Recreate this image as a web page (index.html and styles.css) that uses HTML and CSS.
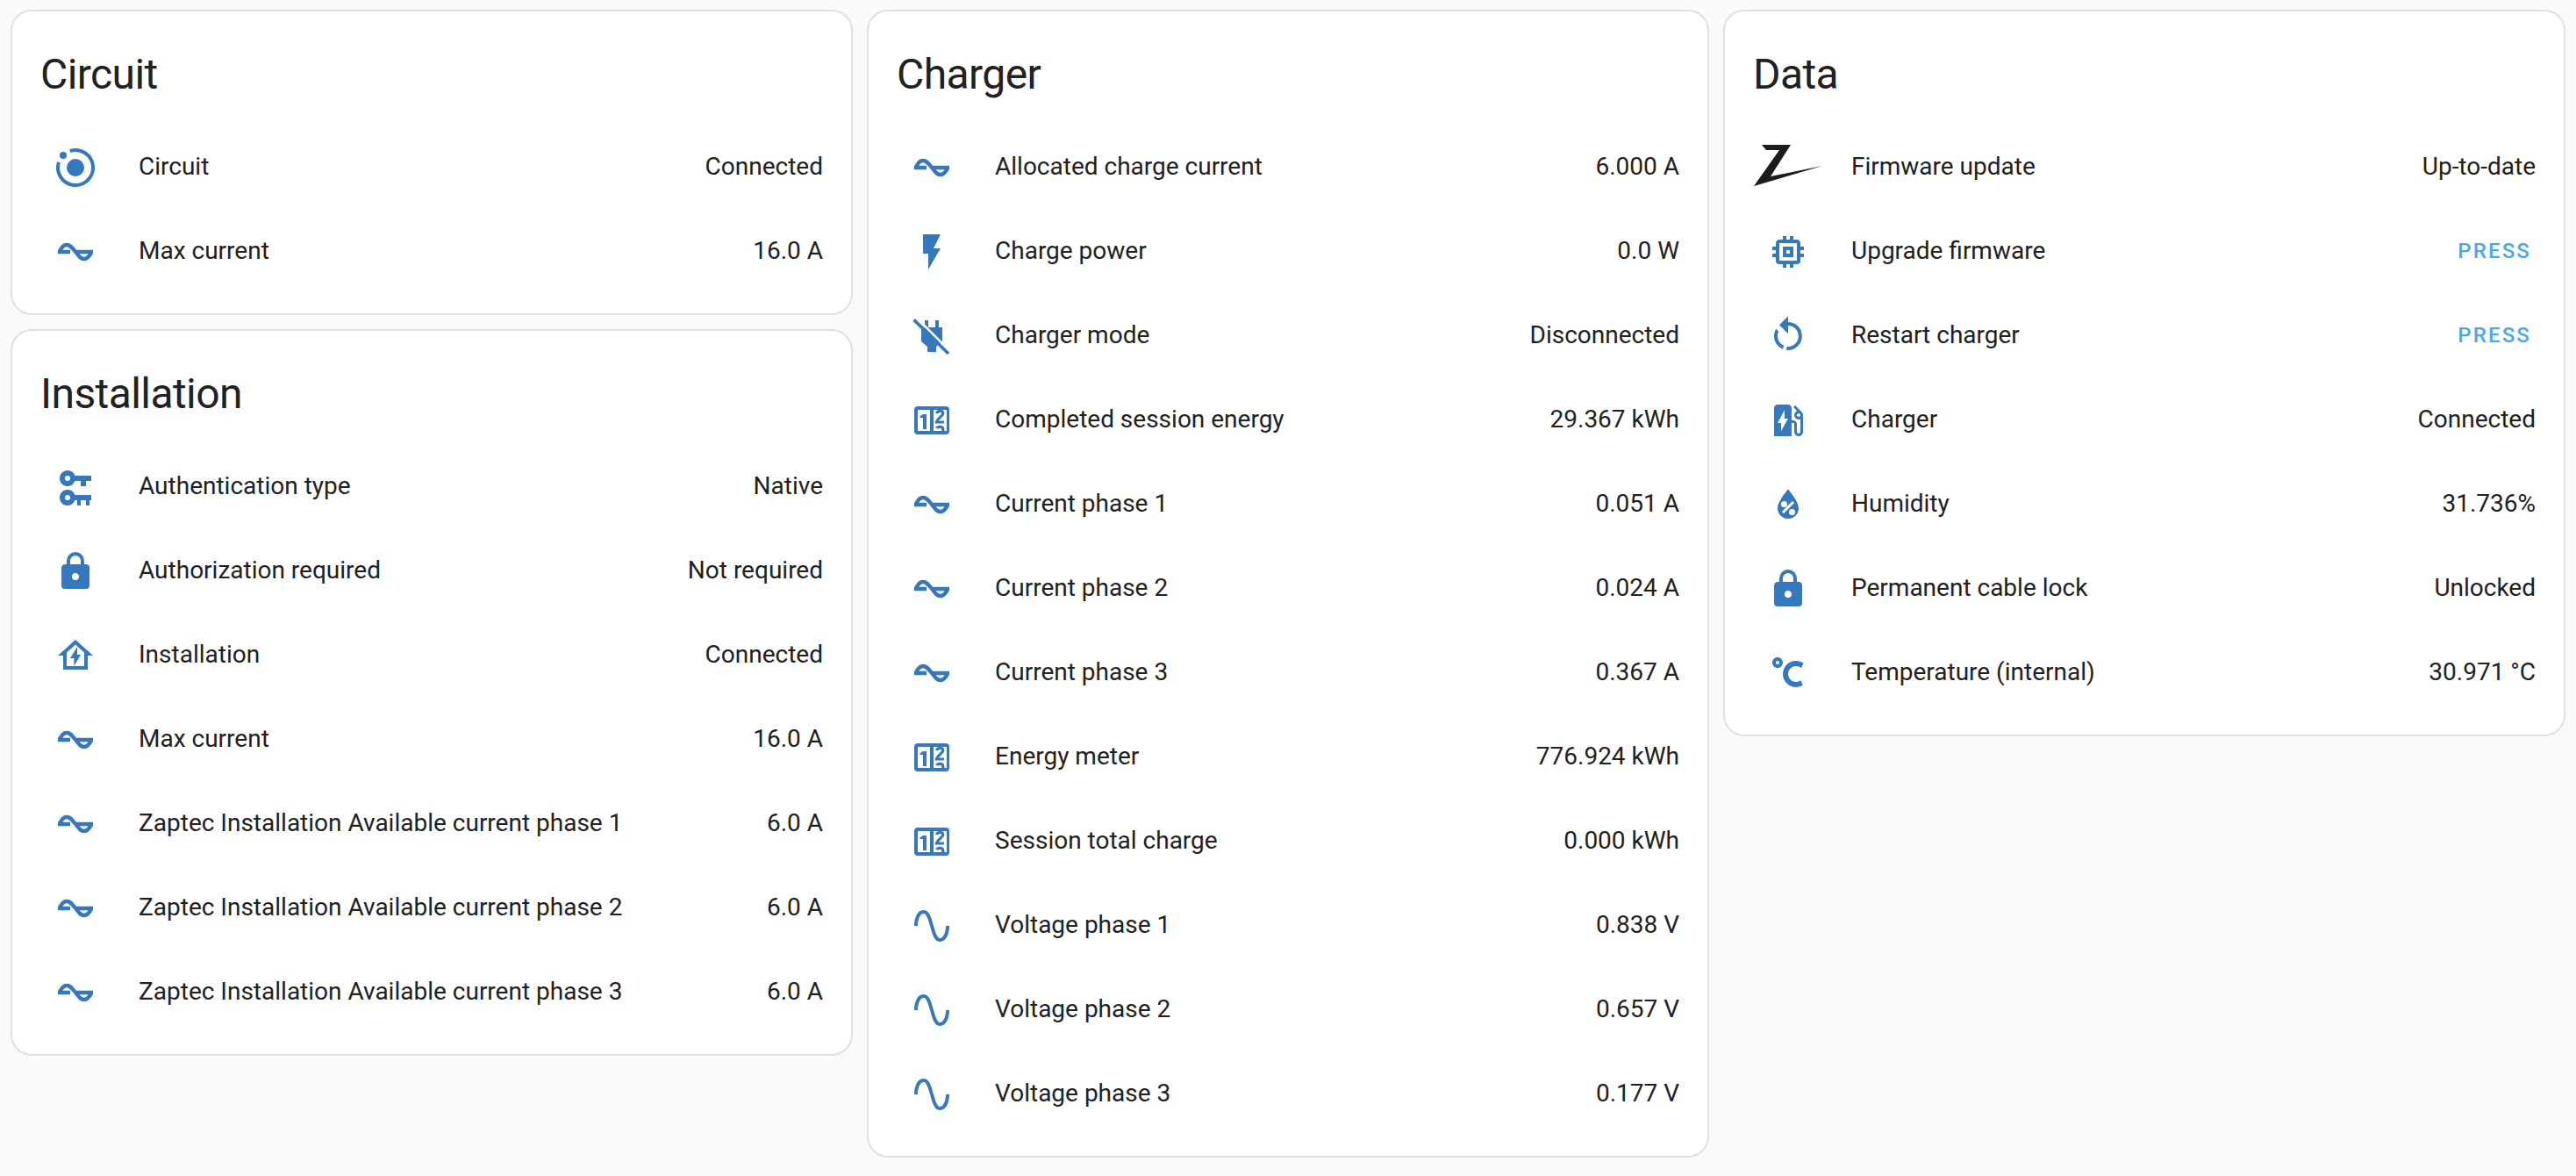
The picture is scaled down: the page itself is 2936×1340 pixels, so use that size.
FILE: index.html
```html
<!DOCTYPE html>
<html lang="en">
<head>
    <meta charset="UTF-8">
    <meta name="viewport" content="width=device-width, initial-scale=1.0">
    <title>Zaptec</title>
    <link rel="stylesheet" href="styles.css">
</head>
<body>
    <!-- icon set, used by every row below -->
    <svg class="icon-defs" aria-hidden="true">
        <symbol id="i-ionic" viewBox="0 0 24 24">
            <circle cx="12" cy="12" r="5"/>
            <circle cx="5" cy="5" r="2"/>
            <path class="line" d="M8.9 2.5A10 10 0 1 1 2.5 8.9"/>
        </symbol>
        <symbol id="i-current" viewBox="0 0 24 24">
            <path class="wave" d="M2 12H9M12 12H22M3 11.6C4 9.6 5.4 8 7 8C9 8 10 9.5 12 12C14 14.5 15 16 17 16C18.6 16 20 14.4 21 12.4"/>
        </symbol>
        <symbol id="i-keys" viewBox="0 0 24 24">
            <path fill-rule="evenodd" d="M7.5 2.5A4.5 4.5 0 0 1 11.7 5.5H21V8.5H18V11.5H15V8.5H11.7A4.5 4.5 0 1 1 7.5 2.5ZM7.5 5.5A1.5 1.5 0 1 0 7.5 8.5A1.5 1.5 0 1 0 7.5 5.5Z"/>
            <path fill-rule="evenodd" d="M7.5 13.5A4.5 4.5 0 0 1 11.7 16.5H21V19.5H20V22.5H18V19.5H15V22.5H13V19.5H11.7A4.5 4.5 0 1 1 7.5 13.5ZM7.5 16.5A1.5 1.5 0 1 0 7.5 19.5A1.5 1.5 0 1 0 7.5 16.5Z"/>
        </symbol>
        <symbol id="i-lock" viewBox="0 0 24 24">
            <path d="M12,17A2,2 0 0,0 14,15C14,13.89 13.1,13 12,13A2,2 0 0,0 10,15A2,2 0 0,0 12,17M18,8A2,2 0 0,1 20,10V20A2,2 0 0,1 18,22H6A2,2 0 0,1 4,20V10C4,8.89 4.9,8 6,8H7V6A5,5 0 0,1 12,1A5,5 0 0,1 17,6V8H18M12,3A3,3 0 0,0 9,6V8H15V6A3,3 0 0,0 12,3Z"/>
        </symbol>
        <symbol id="i-home-bolt" viewBox="0 0 24 24">
            <path fill-rule="evenodd" d="M12 3L2 12H5V20H19V12H22L12 3ZM12 5.7L17 10.2V18H7V10.2L12 5.7Z"/>
            <path d="M13 7L9 13.5H11.2V18L15 11.5H13V7Z"/>
        </symbol>
        <symbol id="i-flash" viewBox="0 0 24 24">
            <path d="M7,2V13H10V22L17,10H13L17,2H7Z"/>
        </symbol>
        <symbol id="i-plug-off" viewBox="0 0 24 24">
            <path d="M8 3H10V7H14V3H16V7H18V15L14.5 18V21H9.5V18L6 15V7H8Z"/>
            <path class="gap" d="M3 1.2L23 21.2"/>
            <path class="slash" d="M1.8 2.7L21.5 22"/>
        </symbol>
        <symbol id="i-counter" viewBox="0 0 24 24">
            <path fill-rule="evenodd" d="M4 4H20A2 2 0 0 1 22 6V18A2 2 0 0 1 20 20H4A2 2 0 0 1 2 18V6A2 2 0 0 1 4 4ZM4 6V18H11V6H4ZM13 6V18H20.5V6H13Z"/>
            <path d="M7 8.5H9V17H7V10.5H5.3V9.6Z"/>
            <path class="digit" d="M14.8 8C15 6.5 18.4 6 18.4 8C18.4 9.6 15 11 14.7 13H19"/>
            <path class="digit" d="M14.8 16.6C15.3 15.4 18.4 15.3 18.4 17V18"/>
        </symbol>
        <symbol id="i-sine" viewBox="0 0 24 24">
            <path d="M16.5,21C13.5,21 12.31,16.76 11.05,12.28C10.14,9.04 9,5 7.5,5C4.11,5 4,11.93 4,12H2C2,11.63 2.06,3 7.5,3C10.5,3 11.71,7.25 12.97,11.74C13.83,14.8 15,19 16.5,19C19.94,19 20.03,12.07 20.03,12H22.03C22.03,12.37 21.97,21 16.5,21Z"/>
        </symbol>
        <symbol id="i-memory" viewBox="0 0 24 24">
            <path d="M17,17H7V7H17M21,11V9H19V7C19,5.89 18.1,5 17,5H15V3H13V5H11V3H9V5H7C5.89,5 5,5.89 5,7V9H3V11H5V13H3V15H5V17A2,2 0 0,0 7,19H9V21H11V19H13V21H15V19H17A2,2 0 0,0 19,17V15H21V13H19V11M13,13H11V11H13M15,9H9V15H15V9Z"/>
        </symbol>
        <symbol id="i-restart" viewBox="0 0 24 24">
            <path d="M12,4C14.1,4 16.1,4.8 17.6,6.3C20.7,9.4 20.7,14.5 17.6,17.6C15.8,19.5 13.3,20.2 10.9,19.9L11.4,17.9C13.1,18.1 14.9,17.5 16.2,16.2C18.5,13.9 18.5,10.1 16.2,7.7C15.1,6.6 13.5,6 12,6V10.6L7,5.6L12,0.6V4M6.3,17.6C3.7,15 3.3,11 5.1,7.9L6.6,9.4C5.5,11.6 5.9,14.4 7.8,16.2C8.3,16.7 8.9,17.1 9.6,17.4L9,19.4C8,19 7.1,18.4 6.3,17.6Z"/>
        </symbol>
        <symbol id="i-ev" viewBox="0 0 24 24">
            <path d="M19.77 7.23l.01-.01-3.72-3.72L15 4.56l2.11 2.11c-.94.36-1.61 1.26-1.61 2.33 0 1.38 1.12 2.5 2.5 2.5.36 0 .69-.08 1-.21v7.21c0 .55-.45 1-1 1s-1-.45-1-1V14c0-1.1-.9-2-2-2h-1V5c0-1.1-.9-2-2-2H6c-1.1 0-2 .9-2 2v16h10v-7.5h1.5v5c0 1.38 1.12 2.5 2.5 2.5s2.5-1.12 2.5-2.5V9c0-.69-.28-1.32-.73-1.77zM18 10c-.55 0-1-.45-1-1s.45-1 1-1 1 .45 1 1-.45 1-1 1zM8 18v-4.5H6L10 6v5h2l-4 7z"/>
        </symbol>
        <symbol id="i-water" viewBox="0 0 24 24">
            <path d="M12,3.25C12,3.25 6,10 6,14C6,17.32 8.69,20 12,20A6,6 0 0,0 18,14C18,10 12,3.25 12,3.25M14.47,9.97L15.53,11.03L9.53,17.03L8.47,15.97M9.75,10A1.75,1.75 0 0,1 11.5,11.75A1.75,1.75 0 0,1 9.75,13.5A1.75,1.75 0 0,1 8,11.75A1.75,1.75 0 0,1 9.75,10M14.25,14.5A1.75,1.75 0 0,1 16,16.25A1.75,1.75 0 0,1 14.25,18A1.75,1.75 0 0,1 12.5,16.25A1.75,1.75 0 0,1 14.25,14.5Z"/>
        </symbol>
        <symbol id="i-celsius" viewBox="0 0 24 24">
            <path d="M16.5,5C18.05,5 19.5,5.47 20.69,6.28L19.53,9.17C18.73,8.44 17.67,8 16.5,8C14,8 12,10 12,12.5C12,15 14,17 16.5,17C17.53,17 18.47,16.66 19.23,16.08L20.37,18.93C19.24,19.61 17.92,20 16.5,20C12.36,20 9,16.64 9,12.5C9,8.36 12.36,5 16.5,5M6,3C7.66,3 9,4.34 9,6C9,7.66 7.66,9 6,9C4.34,9 3,7.66 3,6C3,4.34 4.34,3 6,3M6,5C5.45,5 5,5.45 5,6C5,6.55 5.45,7 6,7C6.55,7 7,6.55 7,6C7,5.45 6.55,5 6,5Z"/>
        </symbol>
    </svg>

    <div class="dashboard">
        <div class="column">
            <section class="card">
                <h2 class="card-title">Circuit</h2>
                <div class="rows">
                    <div class="row"><span class="badge"><svg class="icon"><use href="#i-ionic"/></svg></span><span class="name">Circuit</span><span class="state">Connected</span></div>
                    <div class="row"><span class="badge"><svg class="icon"><use href="#i-current"/></svg></span><span class="name">Max current</span><span class="state">16.0 A</span></div>
                </div>
            </section>
            <section class="card">
                <h2 class="card-title">Installation</h2>
                <div class="rows">
                    <div class="row"><span class="badge"><svg class="icon"><use href="#i-keys"/></svg></span><span class="name">Authentication type</span><span class="state">Native</span></div>
                    <div class="row"><span class="badge"><svg class="icon"><use href="#i-lock"/></svg></span><span class="name">Authorization required</span><span class="state">Not required</span></div>
                    <div class="row"><span class="badge"><svg class="icon"><use href="#i-home-bolt"/></svg></span><span class="name">Installation</span><span class="state">Connected</span></div>
                    <div class="row"><span class="badge"><svg class="icon"><use href="#i-current"/></svg></span><span class="name">Max current</span><span class="state">16.0 A</span></div>
                    <div class="row"><span class="badge"><svg class="icon"><use href="#i-current"/></svg></span><span class="name">Zaptec Installation Available current phase 1</span><span class="state">6.0 A</span></div>
                    <div class="row"><span class="badge"><svg class="icon"><use href="#i-current"/></svg></span><span class="name">Zaptec Installation Available current phase 2</span><span class="state">6.0 A</span></div>
                    <div class="row"><span class="badge"><svg class="icon"><use href="#i-current"/></svg></span><span class="name">Zaptec Installation Available current phase 3</span><span class="state">6.0 A</span></div>
                </div>
            </section>
        </div>

        <div class="column">
            <section class="card">
                <h2 class="card-title">Charger</h2>
                <div class="rows">
                    <div class="row"><span class="badge"><svg class="icon"><use href="#i-current"/></svg></span><span class="name">Allocated charge current</span><span class="state">6.000 A</span></div>
                    <div class="row"><span class="badge"><svg class="icon"><use href="#i-flash"/></svg></span><span class="name">Charge power</span><span class="state">0.0 W</span></div>
                    <div class="row"><span class="badge"><svg class="icon"><use href="#i-plug-off"/></svg></span><span class="name">Charger mode</span><span class="state">Disconnected</span></div>
                    <div class="row"><span class="badge"><svg class="icon"><use href="#i-counter"/></svg></span><span class="name">Completed session energy</span><span class="state">29.367 kWh</span></div>
                    <div class="row"><span class="badge"><svg class="icon"><use href="#i-current"/></svg></span><span class="name">Current phase 1</span><span class="state">0.051 A</span></div>
                    <div class="row"><span class="badge"><svg class="icon"><use href="#i-current"/></svg></span><span class="name">Current phase 2</span><span class="state">0.024 A</span></div>
                    <div class="row"><span class="badge"><svg class="icon"><use href="#i-current"/></svg></span><span class="name">Current phase 3</span><span class="state">0.367 A</span></div>
                    <div class="row"><span class="badge"><svg class="icon"><use href="#i-counter"/></svg></span><span class="name">Energy meter</span><span class="state">776.924 kWh</span></div>
                    <div class="row"><span class="badge"><svg class="icon"><use href="#i-counter"/></svg></span><span class="name">Session total charge</span><span class="state">0.000 kWh</span></div>
                    <div class="row"><span class="badge"><svg class="icon"><use href="#i-sine"/></svg></span><span class="name">Voltage phase 1</span><span class="state">0.838 V</span></div>
                    <div class="row"><span class="badge"><svg class="icon"><use href="#i-sine"/></svg></span><span class="name">Voltage phase 2</span><span class="state">0.657 V</span></div>
                    <div class="row"><span class="badge"><svg class="icon"><use href="#i-sine"/></svg></span><span class="name">Voltage phase 3</span><span class="state">0.177 V</span></div>
                </div>
            </section>
        </div>

        <div class="column">
            <section class="card">
                <h2 class="card-title">Data</h2>
                <div class="rows">
                    <div class="row"><span class="badge"><svg class="logo" viewBox="0 0 80 80"><path d="M10 14H43L20 50L79 38L1 61L30 20H15Z"/></svg></span><span class="name">Firmware update</span><span class="state">Up-to-date</span></div>
                    <div class="row"><span class="badge"><svg class="icon"><use href="#i-memory"/></svg></span><span class="name">Upgrade firmware</span><button class="press">Press</button></div>
                    <div class="row"><span class="badge"><svg class="icon"><use href="#i-restart"/></svg></span><span class="name">Restart charger</span><button class="press">Press</button></div>
                    <div class="row"><span class="badge"><svg class="icon"><use href="#i-ev"/></svg></span><span class="name">Charger</span><span class="state">Connected</span></div>
                    <div class="row"><span class="badge"><svg class="icon"><use href="#i-water"/></svg></span><span class="name">Humidity</span><span class="state">31.736%</span></div>
                    <div class="row"><span class="badge"><svg class="icon"><use href="#i-lock"/></svg></span><span class="name">Permanent cable lock</span><span class="state">Unlocked</span></div>
                    <div class="row"><span class="badge"><svg class="icon"><use href="#i-celsius"/></svg></span><span class="name">Temperature (internal)</span><span class="state">30.971 °C</span></div>
                </div>
            </section>
        </div>
    </div>
</body>
</html>
```

FILE: styles.css
```css
body{
    margin: 0;
    background-color: #fafafa;
    color: #212121;
    font-family: Roboto, "Liberation Sans", sans-serif;
    font-size: 28px;
}
.icon-defs{
    width: 0;
    height: 0;
    position: absolute;
}
.dashboard{
    display: grid;
    grid-template-columns: repeat(3, 960px);
    gap: 16px;
    padding: 11px 12px 0;
}
.column{
    display: flex;
    flex-direction: column;
    gap: 16px;
}
.card{
    background-color: #fff;
    border: 2px solid #e0e0e0;
    border-radius: 24px;
}
.card-title{
    margin: 0;
    padding: 40px 32px 34px;
    font-size: 48px;
    font-weight: 400;
    line-height: 64px;
    letter-spacing: -0.576px;
}
.rows{
    display: flex;
    flex-direction: column;
    gap: 16px;
    padding: 0 32px 30px;
}
.row{
    display: flex;
    align-items: center;
    height: 80px;
}
.badge{
    display: flex;
    align-items: center;
    justify-content: center;
    flex: none;
    width: 80px;
    height: 80px;
}
.icon{
    width: 48px;
    height: 48px;
    fill: #3578bd;
}
.line{
    fill: none;
    stroke: #3578bd;
    stroke-width: 2;
}
.wave{
    fill: none;
    stroke: #3578bd;
    stroke-width: 2.2;
}
.gap{
    fill: none;
    stroke: #fff;
    stroke-width: 1.2;
}
.slash{
    fill: none;
    stroke: #3578bd;
    stroke-width: 1.8;
}
.digit{
    fill: none;
    stroke: #3578bd;
    stroke-width: 1.6;
}
.logo{
    width: 80px;
    height: 80px;
    fill: #1c1c1c;
}
.name{
    flex: 1;
    margin-left: 32px;
    padding-bottom: 3px;
}
.state{
    text-align: right;
    padding-bottom: 3px;
}
.press{
    padding: 0 5px 3px 0;
    border: none;
    background: none;
    color: #47a8ef;
    font-family: inherit;
    font-size: 24px;
    font-weight: 500;
    letter-spacing: 2.14px;
    text-transform: uppercase;
    cursor: pointer;
}
```
